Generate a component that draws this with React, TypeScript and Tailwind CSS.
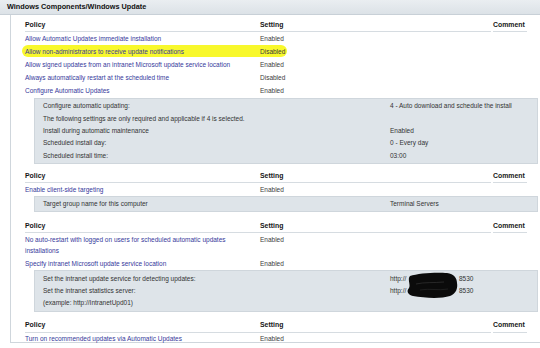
import React from 'react';

type Row = { policy: string; setting: string; highlight?: boolean; wrap?: boolean };
type Detail = { label: string; value?: React.ReactNode };

const linkText = 'text-[#36399b]';

function TableHead() {
  return (
    <div className="flex h-[13px] items-end text-[6.9px] font-bold text-[#161616]">
      <div className="flex h-[13px] w-[466px] items-center border-b border-[#d6dce1]">
        <span className="w-[235px]">Policy</span>
        <span>Setting</span>
      </div>
      <div className="ml-[2px] flex h-[13px] w-[34px] items-center border-b border-[#d6dce1]">
        <span>Comment</span>
      </div>
    </div>
  );
}

function PolicyRow({ row }: { row: Row }) {
  return (
    <div className={`relative flex text-[6.5px] ${row.wrap ? 'py-[1px] leading-[11px]' : 'h-[13px] items-center'}`}>
      {row.highlight && (
        <div className="absolute left-[-3px] top-[0px] h-[12px] w-[265px] rounded-full bg-[#f8f82c] blur-[0.6px]" />
      )}
      <span className={`relative w-[235px] shrink-0 ${linkText}`}>
        <span className="block max-w-[228px]">{row.policy}</span>
      </span>
      <span className="relative text-[#3c3c3c]">{row.setting}</span>
    </div>
  );
}

function DetailBox({ items, children }: { items: Detail[]; children?: React.ReactNode }) {
  return (
    <div className="relative ml-[9px] mr-[2px] border border-[#cfd6dc] bg-[#dee4e9] py-[1px] pl-[8px] text-[6.5px] text-[#333]">
      {items.map((it, i) => (
        <div key={i} className="flex h-[12.4px] items-center">
          <span className="w-[347px]">{it.label}</span>
          <span>{it.value}</span>
        </div>
      ))}
      {children}
    </div>
  );
}

function Redaction() {
  return (
    <svg className="absolute left-[366px] top-[1px]" width="62" height="28" viewBox="0 0 62 28">
      <path
        d="M9 4 C17 1 36 0 46 1 C53 2 56 6 56 11 C57 16 55 22 49 24 C40 27 23 26 12 24 C7 23 5 19 8 16 C10 13 6 7 9 4 Z"
        fill="#0b0b0b"
      />
      <path d="M15 12 C23 10 33 11 43 10" stroke="#3a3a3a" strokeWidth="0.6" fill="none" />
      <path d="M19 18 C29 16 37 19 47 17" stroke="#333" strokeWidth="0.5" fill="none" />
    </svg>
  );
}

const url = (
  <span className="flex">
    <span className="w-[69px]">http://</span>
    <span>8530</span>
  </span>
);

export default function App() {
  return (
    <div className="h-[348px] w-[540px] overflow-hidden bg-white font-['Liberation_Sans',Arial,sans-serif]">
      {/* title bar */}
      <div className="flex h-[15px] items-center border-b border-[#c8d0d7] bg-gradient-to-b from-[#eaeef1] to-[#dce2e7] pl-[7px] text-[7.3px] font-bold text-[#111]">
        Windows Components/Windows Update
      </div>

      <div className="ml-[10px] h-[328px] border-b border-l border-[#cfd6dc] pl-[14px] pt-[4px]">
        <TableHead />
        {[
          { policy: 'Allow Automatic Updates immediate installation', setting: 'Enabled' },
          { policy: 'Allow non-administrators to receive update notifications', setting: 'Disabled', highlight: true },
          { policy: 'Allow signed updates from an intranet Microsoft update service location', setting: 'Enabled' },
          { policy: 'Always automatically restart at the scheduled time', setting: 'Disabled' },
          { policy: 'Configure Automatic Updates', setting: 'Enabled' },
        ].map((r, i) => (
          <PolicyRow key={i} row={r} />
        ))}
        <div className="mt-[1px]">
          <DetailBox
            items={[
              { label: 'Configure automatic updating:', value: '4 - Auto download and schedule the install' },
              { label: 'The following settings are only required and applicable if 4 is selected.' },
              { label: 'Install during automatic maintenance', value: 'Enabled' },
              { label: 'Scheduled install day:', value: '0 - Every day' },
              { label: 'Scheduled install time:', value: '03:00' },
            ]}
          />
        </div>

        <div className="mt-[6px]">
          <TableHead />
          <PolicyRow row={{ policy: 'Enable client-side targeting', setting: 'Enabled' }} />
          <DetailBox items={[{ label: 'Target group name for this computer', value: 'Terminal Servers' }]} />
        </div>

        <div className="mt-[8px]">
          <TableHead />
          <PolicyRow
            row={{
              policy: 'No auto-restart with logged on users for scheduled automatic updates installations',
              setting: 'Enabled',
              wrap: true,
            }}
          />
          <PolicyRow row={{ policy: 'Specify intranet Microsoft update service location', setting: 'Enabled' }} />
          <DetailBox
            items={[
              { label: 'Set the intranet update service for detecting updates:', value: url },
              { label: 'Set the intranet statistics server:', value: url },
              { label: '(example: http://IntranetUpd01)' },
            ]}
          >
            <Redaction />
          </DetailBox>
        </div>

        <div className="mt-[8px]">
          <TableHead />
          <PolicyRow row={{ policy: 'Turn on recommended updates via Automatic Updates', setting: 'Enabled' }} />
        </div>
      </div>
    </div>
  );
}
